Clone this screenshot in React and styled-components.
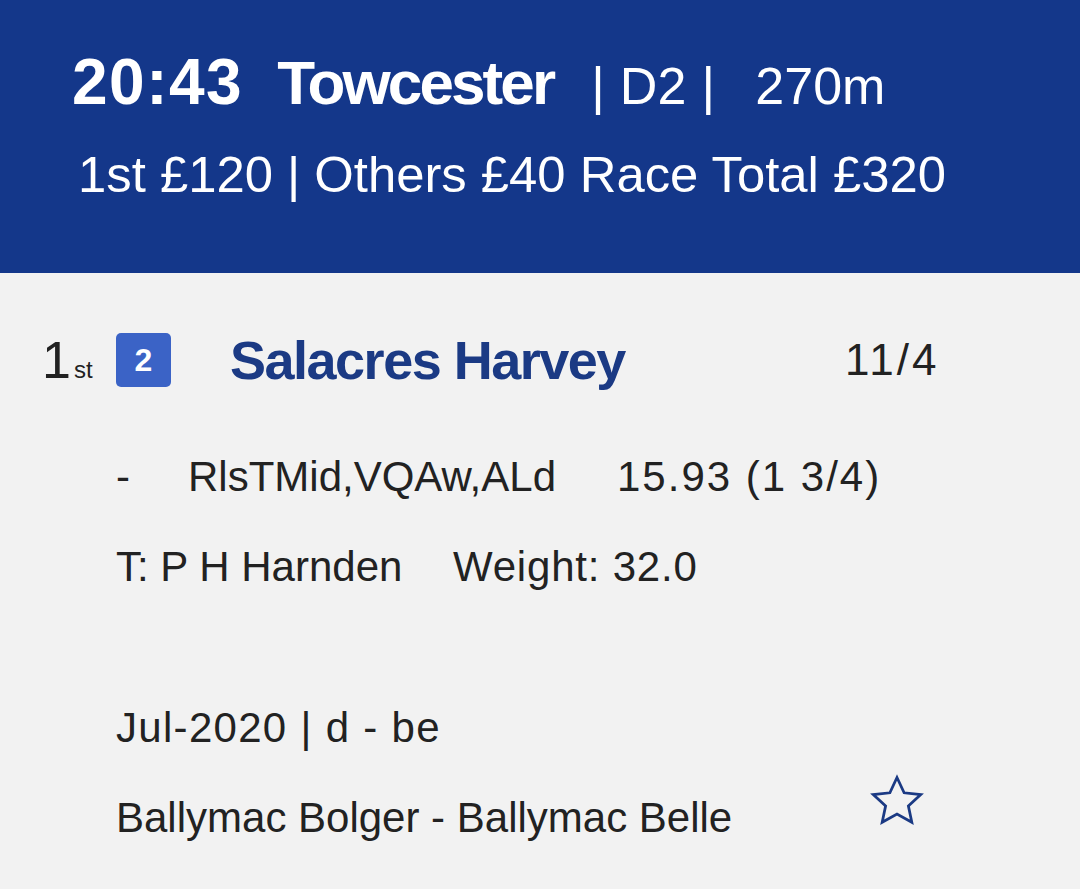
import styled, { createGlobalStyle } from "styled-components";

const GlobalStyle = createGlobalStyle`
  html, body {
    margin: 0;
    padding: 0;
    background: #f2f2f2;
  }
  body {
    font-family: "Liberation Sans", Arial, sans-serif;
    color: #222;
  }
`;

const race = {
  time: "20:43",
  track: "Towcester",
  grade: "D2",
  distance: "270m",
  prizes: "1st £120 | Others £40 Race Total £320",
};

const runner = {
  place: "1",
  suffix: "st",
  trap: 2,
  name: "Salacres Harvey",
  odds: "11/4",
  sectional: "-",
  comment: "RlsTMid,VQAw,ALd",
  time: "15.93 (1 3/4)",
  trainer: "T: P H Harnden",
  weight: "Weight: 32.0",
  whelped: "Jul-2020 | d - be",
  breeding: "Ballymac Bolger - Ballymac Belle",
};

export default function App() {
  return (
    <>
      <GlobalStyle />
      <Page>
        <Header>
          <TitleRow>
            <Time>{race.time}</Time>
            <Track>{race.track}</Track>
            <Meta>| {race.grade} |</Meta>
            <Distance>{race.distance}</Distance>
          </TitleRow>
          <Prizes>{race.prizes}</Prizes>
        </Header>
        <Result>
          <TopRow>
            <Place>
              {runner.place}
              <small>{runner.suffix}</small>
            </Place>
            <Trap>{runner.trap}</Trap>
            <Name>{runner.name}</Name>
            <Odds>{runner.odds}</Odds>
          </TopRow>
          <Details>
            <Line $gap={45}>
              <Dash>{runner.sectional}</Dash>
              <Comment>{runner.comment}</Comment>
              <Wide>{runner.time}</Wide>
            </Line>
            <Line $gap={30}>
              <Trainer>{runner.trainer}</Trainer>
              <Wide $spacing={0.8}>{runner.weight}</Wide>
            </Line>
            <Line $gap={101}>
              <Wide $spacing={1.3}>{runner.whelped}</Wide>
            </Line>
            <BreedingRow $gap={30}>
              <span>{runner.breeding}</span>
              <Star viewBox="0 0 24 24" aria-hidden="true">
                <path d="M12 2.6l2.85 6.1 6.65.75-4.95 4.5 1.38 6.55L12 17.2l-5.93 3.3 1.38-6.55-4.95-4.5 6.65-.75z" />
              </Star>
            </BreedingRow>
          </Details>
        </Result>
      </Page>
    </>
  );
}

const Page = styled.div`
  width: 1080px;
  height: 889px;
  overflow: hidden;
  background: #f2f2f2;
`;

const Header = styled.header`
  background: #14378a;
  color: #fff;
  height: 273px;
  box-sizing: border-box;
  padding: 42px 0 0 72px;
`;

const TitleRow = styled.div`
  display: flex;
  align-items: baseline;
  line-height: 80px;
  white-space: pre;
`;

const Time = styled.span`
  font-size: 64px;
  font-weight: 700;
  letter-spacing: 1.5px;
  margin-right: 34px;
`;

const Track = styled.span`
  font-size: 62px;
  font-weight: 700;
  letter-spacing: -2.9px;
  margin-right: 38px;
`;

const Meta = styled.span`
  font-size: 52px;
  letter-spacing: 0.3px;
`;

const Distance = styled.span`
  font-size: 52px;
  margin-left: 40px;
`;

const Prizes = styled.div`
  font-size: 50.8px;
  line-height: 60px;
  margin-top: 19px;
  margin-left: 6px;
  white-space: pre;
`;

const Result = styled.section`
  padding: 0;
`;

const TopRow = styled.div`
  display: flex;
  align-items: center;
  height: 84px;
  margin-top: 45px;
`;

const Place = styled.div`
  width: 74px;
  padding-left: 42px;
  font-size: 52px;
  color: #222;

  small {
    font-size: 24px;
    margin-left: 3px;
  }
`;

const Trap = styled.div`
  width: 55px;
  height: 54px;
  border-radius: 5px;
  background: #3b63c6;
  color: #fff;
  font-size: 32px;
  font-weight: 700;
  display: flex;
  align-items: center;
  justify-content: center;
`;

const Name = styled.div`
  margin-left: 59px;
  width: 615px;
  font-size: 54px;
  font-weight: 700;
  letter-spacing: -1.5px;
  color: #1b3a84;
`;

const Odds = styled.div`
  font-size: 44px;
  letter-spacing: 3px;
  color: #222;
`;

const Details = styled.div`
  padding-left: 116px;
  padding-right: 140px;
  font-size: 42px;
  color: #222;
`;

const Line = styled.div`
  display: flex;
  line-height: 60px;
  margin-top: ${(p) => p.$gap}px;
`;

const Dash = styled.span`
  width: 72px;
`;

const Comment = styled.span`
  width: 429px;
`;

const Wide = styled.span`
  letter-spacing: ${(p) => p.$spacing ?? 2}px;
`;

const Trainer = styled.span`
  width: 337px;
`;

const BreedingRow = styled(Line)`
  justify-content: space-between;
`;

const Star = styled.svg`
  width: 60px;
  height: 60px;
  margin-top: -17px;
  margin-right: 13px;
  fill: none;
  stroke: #1b3a84;
  stroke-width: 1.1;
  stroke-linejoin: miter;
`;
